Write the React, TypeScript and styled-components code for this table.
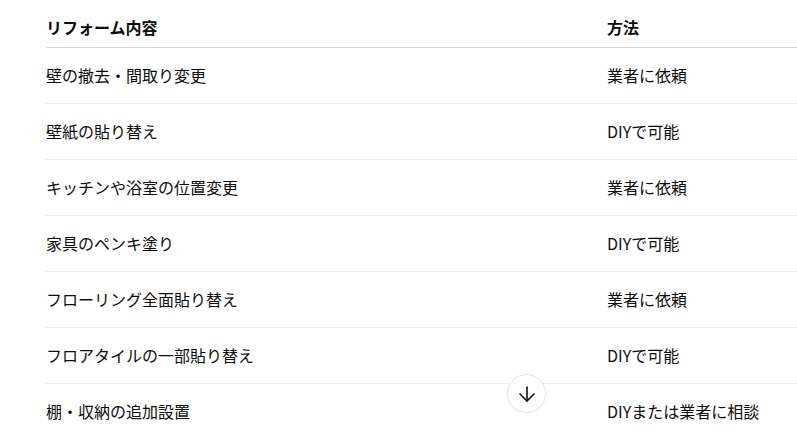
import { createGlobalStyle, styled } from 'styled-components';
import { ArrowDown } from 'lucide-react';

const GlobalStyle = createGlobalStyle`
  html, body {
    margin: 0;
    padding: 0;
    background: #ffffff;
    overflow: hidden;
  }
  body {
    font-family: "Noto Sans CJK JP", "Noto Sans", sans-serif;
    color: #0d0d0d;
  }
`;

const Page = styled.div`
  position: relative;
  width: 797px;
  height: 432px;
  padding: 7px 0 0 46px;
  box-sizing: border-box;
`;

const Table = styled.table`
  width: 780px;
  border-collapse: collapse;
  table-layout: fixed;
  font-size: 16px;
`;

const HeadCell = styled.th<{ $width?: number }>`
  width: ${(p) => (p.$width ? `${p.$width}px` : 'auto')};
  text-align: left;
  font-weight: 700;
  line-height: 24px;
  padding: 8px 0;
  border-bottom: 1px solid #d9d9d9;
`;

const Row = styled.tr`
  border-bottom: 1px solid #ececec;
`;

const Cell = styled.td`
  padding: 15px 0 16px;
  line-height: 24px;
  font-weight: 400;
`;

const ScrollButton = styled.button`
  position: absolute;
  left: 507px;
  top: 374px;
  width: 39px;
  height: 39px;
  border-radius: 50%;
  border: 1px solid #e6e6e6;
  background: #ffffff;
  display: flex;
  align-items: center;
  justify-content: center;
  padding: 0;
  color: #0d0d0d;
  box-shadow: 0 1px 3px rgba(0, 0, 0, 0.03);
`;

const rows = [
  ['壁の撤去・間取り変更', '業者に依頼'],
  ['壁紙の貼り替え', 'DIYで可能'],
  ['キッチンや浴室の位置変更', '業者に依頼'],
  ['家具のペンキ塗り', 'DIYで可能'],
  ['フローリング全面貼り替え', '業者に依頼'],
  ['フロアタイルの一部貼り替え', 'DIYで可能'],
  ['棚・収納の追加設置', 'DIYまたは業者に相談'],
];

const App = () => {
  return (
    <>
      <GlobalStyle />
      <Page>
        <Table>
          <thead>
            <tr>
              <HeadCell $width={561}>リフォーム内容</HeadCell>
              <HeadCell>方法</HeadCell>
            </tr>
          </thead>
          <tbody>
            {rows.map(([item, method]) => (
              <Row key={item}>
                <Cell>{item}</Cell>
                <Cell>{method}</Cell>
              </Row>
            ))}
          </tbody>
        </Table>
        <ScrollButton aria-label="下へスクロール">
          <ArrowDown size={24} strokeWidth={1.6} />
        </ScrollButton>
      </Page>
    </>
  );
};

export default App;
